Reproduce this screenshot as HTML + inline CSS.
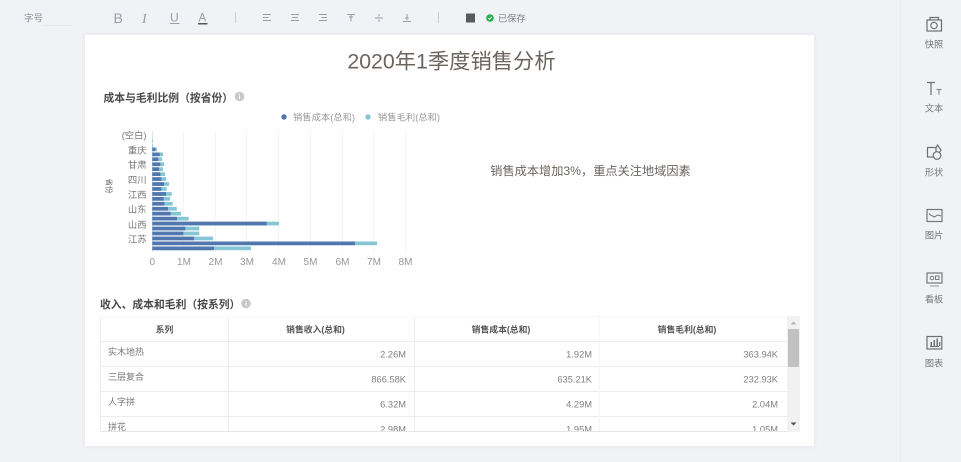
<!DOCTYPE html>
<html lang="zh"><head><meta charset="utf-8"><style>
html,body{margin:0;padding:0;width:961px;height:462px;overflow:hidden;background:#f0f2f6}
svg{display:block;filter:blur(0.35px)}
text{font-family:"Liberation Sans","Noto Sans CJK SC",sans-serif}
</style></head><body>
<svg width="961" height="462" viewBox="0 0 961 462" xmlns="http://www.w3.org/2000/svg">
<defs>
<filter id="s" x="-5%" y="-5%" width="110%" height="110%"><feGaussianBlur stdDeviation="2"/></filter>
<clipPath id="tb"><rect x="100" y="316" width="700" height="115"/></clipPath>
</defs>
<rect width="961" height="462" fill="#f0f2f6"/>
<rect x="900" y="0" width="1" height="462" fill="#e9ebef"/>
<rect x="85" y="35" width="729" height="411" fill="#dfe1e5" filter="url(#s)"/>
<rect x="85" y="35" width="729" height="411" fill="#fff"/>

<!-- toolbar -->
<text x="24" y="21.500" font-size="9.500" fill="#8a8d92">字号</text>
<rect x="43" y="25" width="29" height="1" fill="#e6e8ec"/>
<g fill="#9a9da2">
<text x="113.500" y="23" font-size="14">B</text>
<text x="142" y="23" font-size="14" font-style="italic" style="font-family:'Liberation Serif',serif">I</text>
<text x="170" y="21.500" font-size="12">U</text><rect x="170" y="23" width="9.500" height="1"/>
<text x="198.500" y="21.500" font-size="11.500">A</text><rect x="198" y="23" width="9.500" height="1.500" fill="#555"/>
</g>
<rect x="235" y="12" width="1" height="11" fill="#c9ccd0"/>
<rect x="438" y="12" width="1" height="11" fill="#c9ccd0"/>
<g fill="none" stroke="#9a9da2" stroke-width="1">
<path d="M263 14.500h8M263 17.500h5.500M263 20.500h8"/>
<path d="M291 14.500h8M292 17.500h6M291 20.500h8"/>
<path d="M319 14.500h8M321.500 17.500h5.500M319 20.500h8"/>
<path d="M347 14.500h8M351 14.500v7M349 17h4"/>
<path d="M375 18h8M379 14v2.500M379 19.500v2.500"/>
<path d="M403 21.500h8M407 14v6M405 18h4"/>
</g>
<rect x="466" y="13.500" width="9" height="9" fill="#5a5a5a"/>
<circle cx="490" cy="18" r="3.800" fill="#22b14c"/>
<path d="M488.200 18l1.300 1.300 2.300-2.500" fill="none" stroke="#fff" stroke-width="1"/>
<text x="498" y="21.500" font-size="9.200" fill="#7d8085">已保存</text>

<!-- title -->
<text x="451.500" y="68.500" font-size="21.300" fill="#6b6460" text-anchor="middle">2020年1季度销售分析</text>

<!-- chart heading -->
<text x="103.500" y="101.500" font-size="10.800" font-weight="bold" fill="#4a4a4a">成本与毛利比例（按省份）</text>
<circle cx="239.500" cy="96.500" r="4.800" fill="#c8c8c8"/><rect x="239" y="95.500" width="1" height="3.500" fill="#fff"/><rect x="239" y="93.800" width="1" height="1" fill="#fff"/>

<!-- legend -->
<circle cx="284" cy="117" r="2.700" fill="#5277ae"/>
<text x="293" y="120.500" font-size="9.300" fill="#9a9a9a">销售成本(总和)</text>
<circle cx="368" cy="117" r="2.700" fill="#86c6d4"/>
<text x="378" y="120.500" font-size="9.300" fill="#9a9a9a">销售毛利(总和)</text>

<!-- chart grid -->
<g fill="#f3f4f6">
<rect x="183" y="131" width="1" height="121"/><rect x="215" y="131" width="1" height="121"/><rect x="246" y="131" width="1" height="121"/><rect x="278" y="131" width="1" height="121"/><rect x="310" y="131" width="1" height="121"/><rect x="342" y="131" width="1" height="121"/><rect x="373" y="131" width="1" height="121"/><rect x="405" y="131" width="1" height="121"/>
</g>
<rect x="152" y="131" width="1" height="121" fill="#dfe3e8"/>

<!-- bars -->
<g fill="#86c6d4">
<rect x="152.300" y="139.300" width="0.700" height="3"/><rect x="152.300" y="144.300" width="0.700" height="3"/>
<rect x="152.300" y="147.500" width="4.700" height="3.700"/>
<rect x="152.300" y="152.500" width="10.700" height="3.700"/>
<rect x="152.300" y="157.400" width="9.700" height="3.700"/>
<rect x="152.300" y="162.400" width="11.700" height="3.700"/>
<rect x="152.300" y="167.300" width="10.700" height="3.700"/>
<rect x="152.300" y="172.300" width="12.700" height="3.700"/>
<rect x="152.300" y="177.200" width="13.700" height="3.700"/>
<rect x="152.300" y="182.200" width="16.700" height="3.700"/>
<rect x="152.300" y="187.100" width="14.400" height="3.700"/>
<rect x="152.300" y="192.100" width="19.400" height="3.700"/>
<rect x="152.300" y="197" width="17.700" height="3.700"/>
<rect x="152.300" y="201.900" width="20.400" height="3.700"/>
<rect x="152.300" y="206.900" width="24.400" height="3.700"/>
<rect x="152.300" y="211.800" width="28.700" height="3.700"/>
<rect x="152.300" y="216.800" width="36.400" height="3.700"/>
<rect x="152.300" y="221.700" width="126.700" height="3.700"/>
<rect x="152.300" y="226.700" width="47" height="3.700"/>
<rect x="152.300" y="231.600" width="47" height="3.700"/>
<rect x="152.300" y="236.600" width="60.700" height="3.700"/>
<rect x="152.300" y="241.500" width="224.700" height="3.700"/>
<rect x="152.300" y="246.500" width="98.700" height="3.700"/>
</g>
<g fill="#5277ae">
<rect x="152.300" y="147.500" width="3" height="3.700"/>
<rect x="152.300" y="152.500" width="7.400" height="3.700"/>
<rect x="152.300" y="157.400" width="6" height="3.700"/>
<rect x="152.300" y="162.400" width="8" height="3.700"/>
<rect x="152.300" y="167.300" width="6.700" height="3.700"/>
<rect x="152.300" y="172.300" width="8" height="3.700"/>
<rect x="152.300" y="177.200" width="9" height="3.700"/>
<rect x="152.300" y="182.200" width="11.700" height="3.700"/>
<rect x="152.300" y="187.100" width="9" height="3.700"/>
<rect x="152.300" y="192.100" width="13.700" height="3.700"/>
<rect x="152.300" y="197" width="11.400" height="3.700"/>
<rect x="152.300" y="201.900" width="12" height="3.700"/>
<rect x="152.300" y="206.900" width="15.700" height="3.700"/>
<rect x="152.300" y="211.800" width="18.400" height="3.700"/>
<rect x="152.300" y="216.800" width="24.700" height="3.700"/>
<rect x="152.300" y="221.700" width="114.400" height="3.700"/>
<rect x="152.300" y="226.700" width="33" height="3.700"/>
<rect x="152.300" y="231.600" width="31" height="3.700"/>
<rect x="152.300" y="236.600" width="41.700" height="3.700"/>
<rect x="152.300" y="241.500" width="202.700" height="3.700"/>
<rect x="152.300" y="246.500" width="61.700" height="3.700"/>
</g>

<!-- y labels -->
<g font-size="9.300" fill="#777" text-anchor="end">
<text x="146.500" y="138.500">(空白)</text>
<text x="146.500" y="153.500">重庆</text>
<text x="146.500" y="168">甘肃</text>
<text x="146.500" y="183">四川</text>
<text x="146.500" y="198">江西</text>
<text x="146.500" y="212.500">山东</text>
<text x="146.500" y="228">山西</text>
<text x="146.500" y="242.500">江苏</text>
</g>
<text transform="translate(106.500,186) rotate(90)" font-size="7.500" fill="#666" text-anchor="middle">省份</text>
<g font-size="10" fill="#969696" text-anchor="middle">
<text x="152.300" y="265">0</text><text x="184" y="265">1M</text><text x="215.500" y="265">2M</text><text x="247" y="265">3M</text><text x="279" y="265">4M</text><text x="310.500" y="265">5M</text><text x="342.500" y="265">6M</text><text x="374" y="265">7M</text><text x="405.500" y="265">8M</text>
</g>

<text x="590.500" y="175" font-size="12.200" fill="#6b6460" text-anchor="middle">销售成本增加3%，重点关注地域因素</text>

<!-- table heading -->
<text x="100" y="308" font-size="10.800" font-weight="bold" fill="#4a4a4a">收入、成本和毛利（按系列）</text>
<circle cx="246" cy="303.500" r="4.800" fill="#c8c8c8"/><rect x="245.500" y="302.500" width="1" height="3.500" fill="#fff"/><rect x="245.500" y="300.800" width="1" height="1" fill="#fff"/>

<!-- table -->
<g clip-path="url(#tb)">
<rect x="100" y="316" width="700" height="115" fill="#fff"/>
<g fill="#ececec">
<rect x="100" y="341" width="687" height="1"/><rect x="100" y="366" width="687" height="1"/><rect x="100" y="391" width="687" height="1"/><rect x="100" y="416" width="687" height="1"/>
<rect x="228" y="316" width="1" height="115"/><rect x="414" y="316" width="1" height="115"/>
</g>
<rect x="599" y="316" width="1" height="115" fill="#f5f5f5"/>
<g font-size="8.800" font-weight="bold" fill="#555" text-anchor="middle">
<text x="164.500" y="332.500">系列</text><text x="315.500" y="332.500">销售收入(总和)</text><text x="501" y="332.500">销售成本(总和)</text><text x="687" y="332.500">销售毛利(总和)</text>
</g>
<g font-size="9" fill="#777">
<text x="108" y="355">实木地热</text><text x="108" y="380">三层复合</text><text x="108" y="405">人字拼</text><text x="108" y="430">拼花</text>
</g>
<g font-size="9.300" fill="#808080" text-anchor="end">
<text x="406" y="357.500">2.26M</text><text x="592" y="357.500">1.92M</text><text x="778" y="357.500">363.94K</text>
<text x="406" y="382.500">866.58K</text><text x="592" y="382.500">635.21K</text><text x="778" y="382.500">232.93K</text>
<text x="406" y="407.500">6.32M</text><text x="592" y="407.500">4.29M</text><text x="778" y="407.500">2.04M</text>
<text x="406" y="432.500">2.98M</text><text x="592" y="432.500">1.95M</text><text x="778" y="432.500">1.05M</text>
</g>
</g>
<rect x="100" y="316" width="1" height="115" fill="#ececec"/>
<rect x="100" y="431" width="700" height="1" fill="#e6e6e6"/>
<rect x="100" y="316" width="700" height="1" fill="#f6f6f6"/>
<rect x="787" y="316" width="13" height="116" fill="#f1f1f1"/>
<rect x="788" y="329" width="11" height="38" fill="#c1c1c1"/>
<path d="M793.500 321.500l3 3h-6z" fill="#b5b5b5"/>
<path d="M790.500 422.500h6l-3 3z" fill="#505050"/>

<!-- sidebar -->
<g fill="none" stroke="#6f6f6f" stroke-width="1.200">
<rect x="927" y="20" width="14.500" height="11"/><path d="M930 20v-2.500h8.500V20"/><circle cx="934" cy="25.500" r="3.200"/>
<path d="M927 82.500h8M931 82.500v12.500" stroke-width="1.200"/><path d="M936.500 89.500h5M939 89.500v5" stroke="#8a8a8a"/>
<rect x="927.500" y="147.500" width="8.500" height="9.500"/><circle cx="937" cy="155.500" r="3.800" fill="#f0f2f6"/><path d="M936 147.500l1.500-2.500 3.500 5-1.500 2.500"/>
<rect x="927" y="209.500" width="15" height="12" stroke="#777"/><path d="M929 213.500l1.500 1.500 4 2 3-2 3.500 1" stroke-width="1"/>
<rect x="927" y="273" width="15" height="10" stroke="#777"/><path d="M930 286h9" stroke="#aaa"/><circle cx="932" cy="278" r="1.800" stroke-width="0.900"/><rect x="935.500" y="276" width="3.500" height="3.500" stroke-width="0.900"/>
<rect x="927" y="336.500" width="14.800" height="12.500"/><path d="M930 346.500h9" stroke-width="1"/>
</g>
<g fill="#6f6f6f"><rect x="930.500" y="342" width="1.500" height="4"/><rect x="933.500" y="340" width="1.500" height="6"/><rect x="936.500" y="338.500" width="1.500" height="7.500"/><rect x="939" y="342" width="1.300" height="4"/></g>
<g font-size="9.200" fill="#777" text-anchor="middle">
<text x="934" y="47.500">快照</text><text x="934" y="111.500">文本</text><text x="934" y="175.500">形状</text><text x="934" y="238.500">图片</text><text x="934" y="302.500">看板</text><text x="934" y="366.500">图表</text>
</g>
</svg>
</body></html>
